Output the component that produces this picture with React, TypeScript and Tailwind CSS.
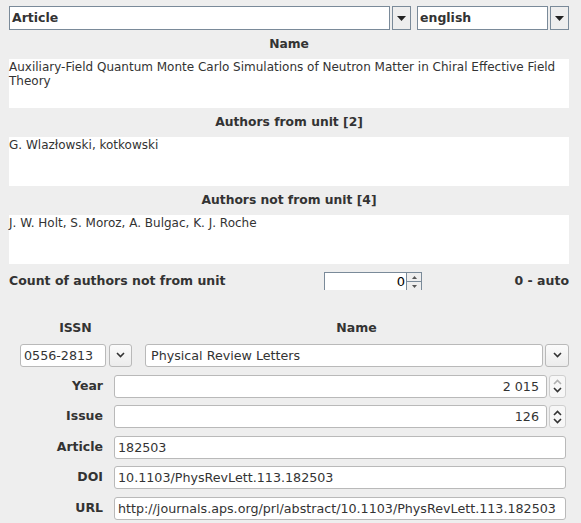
import React from 'react'

const font = { fontFamily: '"DejaVu Sans", "Liberation Sans", sans-serif' }

const Combo: React.FC<{ value: string; className?: string }> = ({ value, className }) => (
  <div className={`flex h-[24px] ${className ?? ''}`}>
    <div className="flex-1 border border-[#7a8a99] bg-white pl-[2px] text-[12.5px] font-bold leading-[22px] text-[#333]">
      {value}
    </div>
    <div className="ml-[2px] flex w-[19px] items-center justify-center border border-[#7a8a99] bg-[#eeeeee]">
      <svg width="9" height="5" viewBox="0 0 9 5">
        <path d="M0 0h9L4.5 5z" fill="#222" />
      </svg>
    </div>
  </div>
)

const SectionLabel: React.FC<{ children: React.ReactNode }> = ({ children }) => (
  <div className="flex h-[29px] items-center justify-center text-[12.3px] font-bold text-[#333]">{children}</div>
)

const Area: React.FC<{ children: React.ReactNode }> = ({ children }) => (
  <div className="h-[49px] bg-white pt-[1px] text-[12px] leading-[14px] text-[#333]">{children}</div>
)

const Chevron: React.FC<{ up?: boolean; color?: string }> = ({ up, color = '#333' }) => (
  <svg width="9" height="6" viewBox="0 0 9 6">
    <path d={up ? 'M1 5l3.5-3.5L8 5' : 'M1 1l3.5 3.5L8 1'} fill="none" stroke={color} strokeWidth="1.6" />
  </svg>
)

const DropBtn: React.FC<{ className?: string }> = ({ className }) => (
  <div className={`flex h-[23px] items-center justify-center rounded-[3px] border border-[#b9b9b9] bg-gradient-to-b from-[#fbfbfb] to-[#ececec] ${className ?? ''}`}>
    <Chevron />
  </div>
)

const Field: React.FC<{ value: string; right?: boolean; className?: string }> = ({ value, right, className }) => (
  <div
    className={`h-[23px] whitespace-nowrap rounded-[3px] border border-[#b9b9b9] bg-white px-[3px] text-[12.7px] leading-[21px] text-[#333] ${right ? 'text-right pr-[7px]' : ''} ${className ?? ''}`}
  >
    {value}
  </div>
)

const Row: React.FC<{ label: string; children: React.ReactNode }> = ({ label, children }) => (
  <div className="mr-[3px] flex h-[23px] items-center">
    <div className="w-[94px] text-right text-[12.5px] font-bold text-[#333]">{label}</div>
    <div className="ml-[11px] flex flex-1 items-center">{children}</div>
  </div>
)

const Spin: React.FC<{ upColor?: string }> = ({ upColor }) => (
  <div className="ml-[2px] flex h-[23px] w-[17px] flex-col items-center justify-center gap-[2px] rounded-[3px] border border-[#cfcfcf] bg-[#f7f7f7]">
    <Chevron up color={upColor} />
    <Chevron />
  </div>
)

export default function App() {
  return (
    <div className="h-[523px] w-[581px] overflow-hidden bg-[#eeeeee] pl-[9px] pr-[12px] pt-[6px]" style={font}>
      <div className="flex">
        <Combo value="Article" className="flex-1" />
        <Combo value="english" className="ml-[6px] w-[152px]" />
      </div>

      <SectionLabel>Name</SectionLabel>
      <Area>Auxiliary-Field Quantum Monte Carlo Simulations of Neutron Matter in Chiral Effective Field Theory</Area>

      <SectionLabel>Authors from unit [2]</SectionLabel>
      <Area>G. Wlazłowski, kotkowski</Area>

      <SectionLabel>Authors not from unit [4]</SectionLabel>
      <Area>J. W. Holt, S. Moroz, A. Bulgac, K. J. Roche</Area>

      <div className="mt-[8px] flex h-[18px] items-center text-[12.5px] font-bold text-[#333]">
        <div className="w-[315px]">Count of authors not from unit</div>
        <div className="flex h-[18px] w-[98px] border-l border-t border-[#7a8a99]">
          <div className="flex-1 bg-white pr-[1px] text-right text-[13px] font-normal leading-[17px] text-black">0</div>
          <div className="flex w-[16px] flex-col border-x border-[#7a8a99]">
            <div className="flex flex-1 items-center justify-center border-b border-[#7a8a99] bg-[#eeeeee]">
              <svg width="5" height="3" viewBox="0 0 5 3"><path d="M0 3h5L2.5 0z" fill="#555" /></svg>
            </div>
            <div className="flex flex-1 items-center justify-center bg-[#eeeeee]">
              <svg width="5" height="3" viewBox="0 0 5 3"><path d="M0 0h5L2.5 3z" fill="#555" /></svg>
            </div>
          </div>
        </div>
        <div className="flex-1 text-right">0 - auto</div>
      </div>

      <div className="mt-[29px] flex text-[12.5px] font-bold text-[#333]">
        <div className="ml-[11px] w-[111px] text-center">ISSN</div>
        <div className="ml-[13px] flex-1 text-center">Name</div>
      </div>

      <div className="mt-[6px] flex items-center">
        <Field value="0556-2813" className="ml-[11px] w-[86px]" />
        <DropBtn className="ml-[3px] w-[23px]" />
        <Field value="Physical Review Letters" className="ml-[13px] flex-1 pl-[5px]" />
        <DropBtn className="ml-[2px] w-[24px]" />
      </div>

      <div className="mt-[8px] flex flex-col gap-[7.5px]">
        <Row label="Year">
          <Field value="2 015" right className="flex-1 bg-[#fafafa]" />
          <Spin upColor="#b0b0b0" />
        </Row>
        <Row label="Issue">
          <Field value="126" right className="flex-1 bg-[#fafafa]" />
          <Spin />
        </Row>
        <Row label="Article">
          <Field value="182503" className="flex-1" />
        </Row>
        <Row label="DOI">
          <Field value="10.1103/PhysRevLett.113.182503" className="flex-1" />
        </Row>
        <Row label="URL">
          <Field value="http://journals.aps.org/prl/abstract/10.1103/PhysRevLett.113.182503" className="flex-1" />
        </Row>
      </div>
    </div>
  )
}
